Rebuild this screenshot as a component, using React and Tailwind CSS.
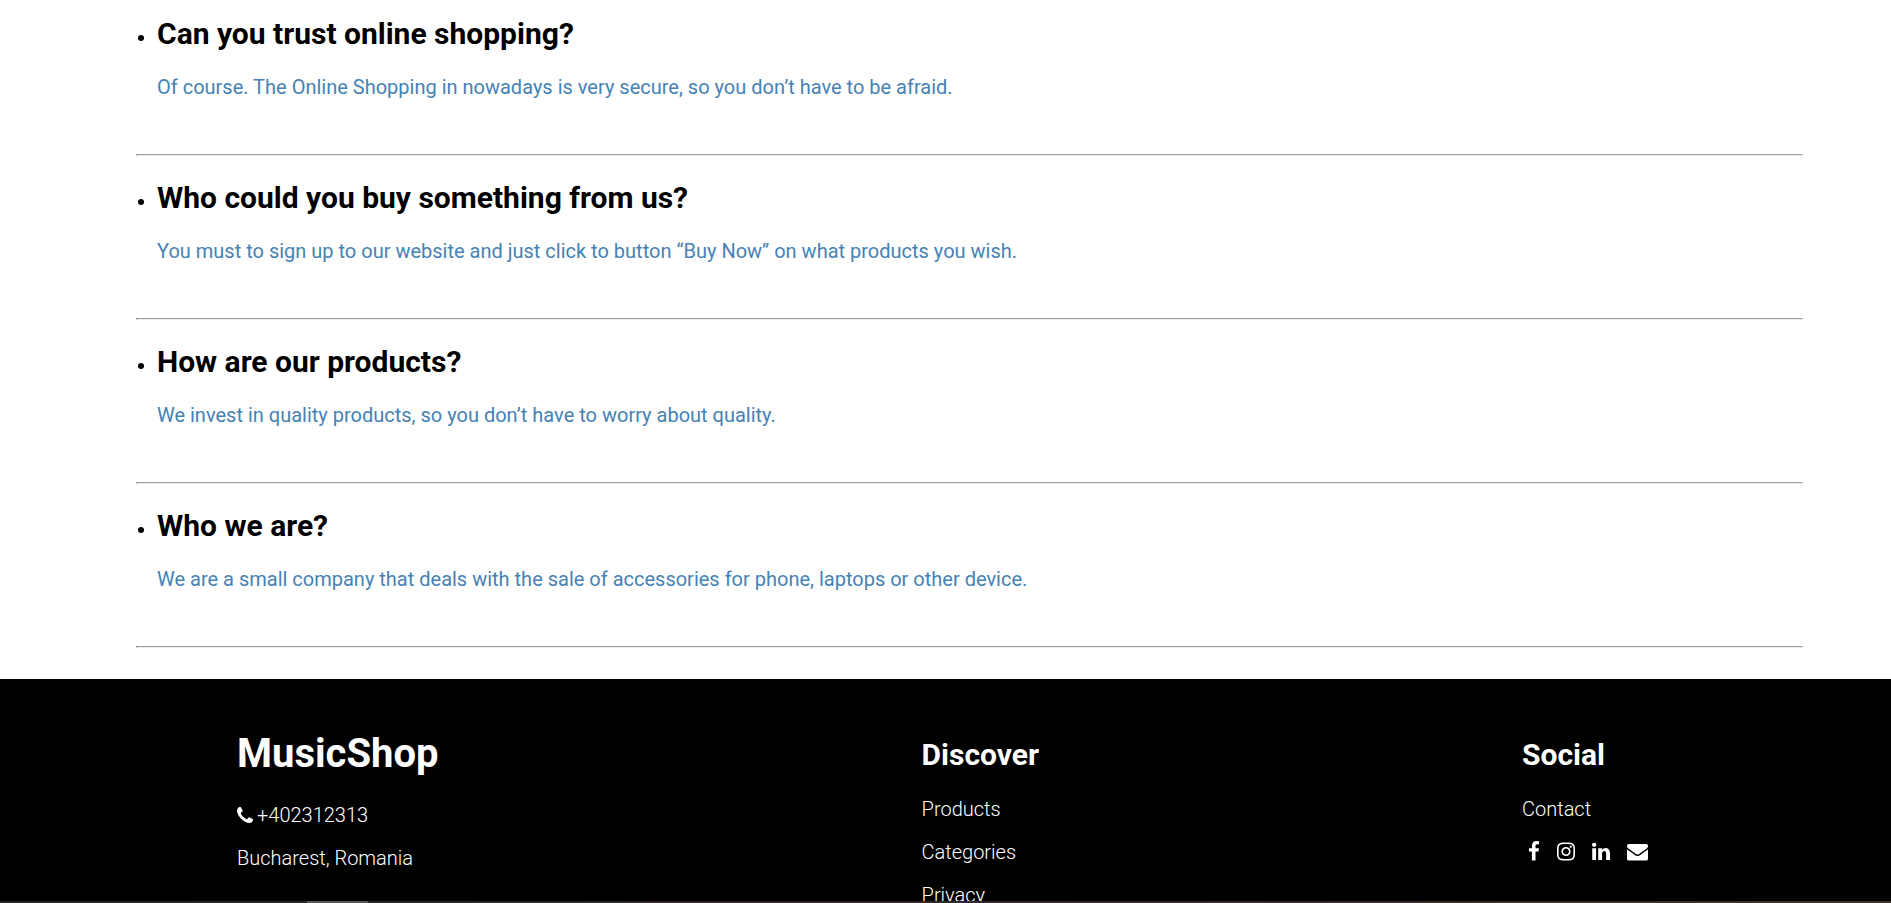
const faqs = [
  {
    question: "Can you trust online shopping?",
    answer: "Of course. The Online Shopping in nowadays is very secure, so you don’t have to be afraid.",
  },
  {
    question: "Who could you buy something from us?",
    answer: "You must to sign up to our website and just click to button “Buy Now” on what products you wish.",
  },
  {
    question: "How are our products?",
    answer: "We invest in quality products, so you don’t have to worry about quality.",
  },
  {
    question: "Who we are?",
    answer: "We are a small company that deals with the sale of accessories for phone, laptops or other device.",
  },
];

const discover = ["Products", "Categories", "Privacy"];

const phonePath =
  "M1408 1112q0 27-10 70.500t-21 68.500q-21 50-122 106-94 51-186 51-27 0-53-3.500t-57.500-12.500-47-14.500-55.500-20.500-49-18q-98-35-175-83-127-79-264-216t-216-264q-48-77-83-175-3-9-18-49t-20.500-55.500-14.500-47-12.500-57.500-3.500-53q0-92 51-186 56-101 106-122 25-11 68.500-21t70.500-10q14 0 21 3 18 6 53 76 11 19 30 54t35 63.500 31 53.500q3 4 17.500 25t21.500 35.500 7 28.500q0 20-28.500 50t-62 55-62 53-28.500 46q0 9 5 22.500t8.500 20.500 14 24 11.500 19q76 137 174 235t235 174q2 1 19 11.500t24 14 20.500 8.500 22.500 5q18 0 46-28.500t53-62 55-62 50-28.500q14 0 28.500 7t35.500 21.500 25 17.500q25 15 53.500 31t63.500 35 54 30q70 35 76 53 3 7 3 21z";

const social = [
  {
    label: "Facebook",
    size: "w-3",
    viewBox: "399 0 1024 1792",
    path: "M1343 12v264h-157q-86 0-116 36t-30 108v189h293l-39 296h-254v759h-306v-759h-255v-296h255v-218q0-186 104-288.5t277-102.5q147 0 228 12z",
  },
  {
    label: "Instagram",
    size: "w-[18px]",
    viewBox: "128 0 1536 1792",
    path: "M1152 896q0-106-75-181t-181-75-181 75-75 181 75 181 181 75 181-75 75-181zm138 0q0 164-115 279t-279 115-279-115-115-279 115-279 279-115 279 115 115 279zm108-410q0 38-27 65t-65 27-65-27-27-65 27-65 65-27 65 27 27 65zm-502-220q-7 0-76.5-.5t-105.500 0-96.500 3-103 10-71.500 18.500q-50 20-88 58t-58 88q-11 29-18.500 71.500t-10 103-3 96.500 0 105.500.5 76.500-.5 76.500 0 105.500 3 96.500 10 103 18.500 71.500q20 50 58 88t88 58q29 11 71.500 18.500t103 10 96.500 3 105.500 0 76.500-.5 76.500.5 105.500 0 96.500-3 103-10 71.500-18.500q50-20 88-58t58-88q11-29 18.500-71.500t10-103 3-96.500 0-105.500-.5-76.500.5-76.500 0-105.500-3-96.500-10-103-18.500-71.500q-20-50-58-88t-88-58q-29-11-71.500-18.500t-103-10-96.500-3-105.500 0-76.500.5zm768 630q0 229-5 317-10 208-124 322t-322 124q-88 5-317 5t-317-5q-208-10-322-124t-124-322q-5-88-5-317t5-317q10-208 124-322t322-124q88-5 317-5t317 5q208 10 322 124t124 322q5 88 5 317z",
  },
  {
    label: "LinkedIn",
    size: "w-[18px]",
    viewBox: "128 0 1536 1792",
    path: "M477 625v991h-330v-991h330zm21-306q1 73-50.5 122t-135.500 49h-2q-82 0-132-49t-50-122q0-74 51.500-122.500t134.500-48.500 133 48.500 51 122.500zm1166 729v568h-329v-530q0-105-40.500-164.500t-126.500-59.500q-63 0-105.500 34.500t-64.500 85.500q-11 30-11 81v553h-329q2-399 2-647t-1-296l-1-48h329v144h-2q20-32 41-56t56.500-52 87-43.500 114.500-15.500q171 0 275 113.500t104 332.500z",
  },
  {
    label: "Email",
    size: "w-[21px]",
    viewBox: "0 0 1792 1792",
    path: "M1792 710v794q0 66-47 113t-113 47h-1472q-66 0-113-47t-47-113v-794q44 49 101 87 362 246 497 345 57 42 92.500 65.500t94.500 48 110 24.500h2q51 0 110-24.500t94.500-48 92.500-65.500q170-123 498-345 57-39 100-87zm0-294q0 79-49 151t-122 123q-376 261-468 325-10 7-42.500 31t-54 38.500-52 32.500-57.500 27-50 9h-2q-23 0-50-9t-57.500-27-52-32.500-54-38.500-42.500-31q-91-64-262-182.500t-205-142.500q-62-42-117-115.500t-55-136.500q0-78 41.500-130t118.500-52h1472q65 0 112.500 47t47.500 113z",
  },
];

export default function App() {
  return (
    <div className="flex h-screen flex-col overflow-hidden bg-white font-['Roboto',sans-serif] text-xl leading-6 text-black">
      <main className="shrink-0 pr-[88px] pb-[23px] pl-[157px]">
        <ul className="list-disc">
          {faqs.map(({ question, answer }) => (
            <li key={question} className="pt-4">
              <h2 className="text-3xl font-bold leading-9">{question}</h2>
              <p className="pt-[23px] text-[#4682b4]">{answer}</p>
              <hr className="mt-[55px] mb-2 -ml-[21px] h-0 border border-t-[#9a9a9a] border-r-[#eeeeee] border-b-[#eeeeee] border-l-[#9a9a9a]" />
            </li>
          ))}
        </ul>
      </main>
      <footer className="flex min-h-0 flex-1 items-start justify-between overflow-hidden bg-black pt-[50px] pr-[243px] pl-[237px] font-light text-white">
        <section>
          <h1 className="text-[40px] font-bold leading-[50px]">MusicShop</h1>
          <a href="tel:+402312313" className="mt-6 flex items-center gap-1">
            <svg viewBox="0 0 1408 1408" className="size-4 shrink-0" fill="currentColor" aria-hidden="true">
              <path d={phonePath} />
            </svg>
            <span>+402312313</span>
          </a>
          <p className="mt-[19px]">Bucharest, Romania</p>
        </section>
        <section className="pt-2">
          <h2 className="text-3xl font-bold leading-9">Discover</h2>
          <ul className="mt-6 flex flex-col gap-[19px]">
            {discover.map((name) => (
              <li key={name}>
                <a href="#">{name}</a>
              </li>
            ))}
          </ul>
        </section>
        <section className="pt-2">
          <h2 className="text-3xl font-bold leading-9">Social</h2>
          <a href="#" className="mt-6 block">
            Contact
          </a>
          <div className="mt-5 flex items-center gap-[17px] pl-1.5">
            {social.map(({ label, size, viewBox, path }) => (
              <a key={label} href="#" aria-label={label} className={size}>
                <svg viewBox={viewBox} className="h-[21px] w-full" fill="currentColor" aria-hidden="true">
                  <path d={path} />
                </svg>
              </a>
            ))}
          </div>
        </section>
      </footer>
      <div className="flex h-0.5 shrink-0 bg-linear-to-r from-[#272425] to-[#3a302c] pl-[307px]">
        <div className="w-[61px] bg-[#575556]" />
      </div>
    </div>
  );
}
